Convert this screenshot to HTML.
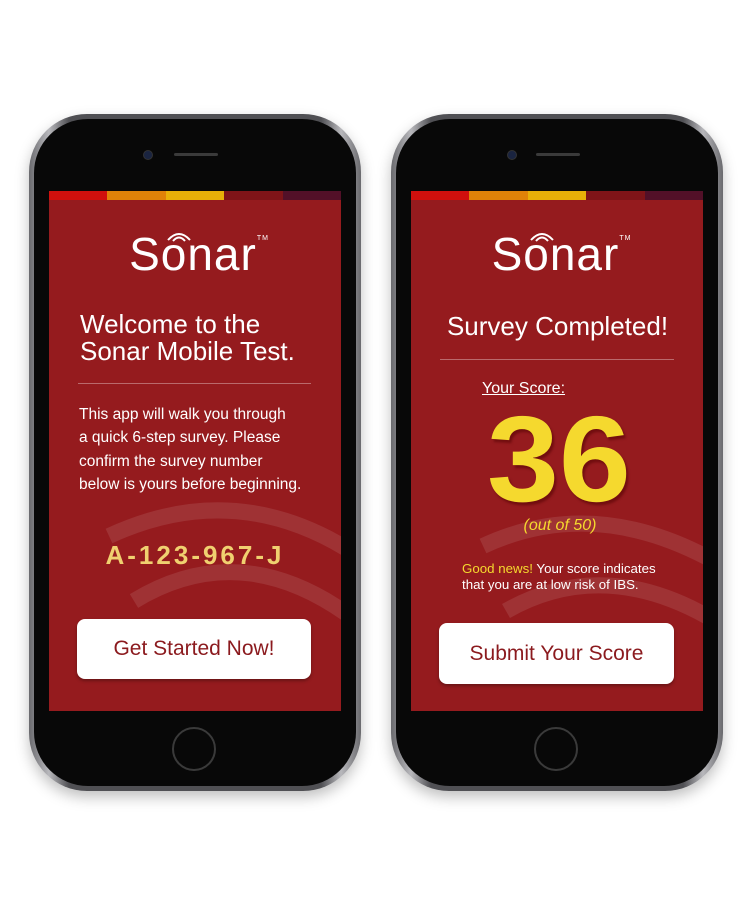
<!DOCTYPE html>
<html><head><style>
body{margin:0;width:750px;height:917px;background:#fff;position:relative;overflow:hidden;font-family:"Liberation Sans",sans-serif}
.ph{position:absolute;top:114px;width:332px;height:677px;border-radius:58px;background:linear-gradient(90deg,#6a6a6e,#b8b8bc 6%,#505054 12%,#505054 88%,#b8b8bc 94%,#6a6a6e);box-shadow:0 6px 14px rgba(0,0,0,.25)}
.in{position:absolute;left:5px;top:5px;right:5px;bottom:5px;border-radius:54px;background:#080808}
.cam{position:absolute;top:36px;width:8px;height:8px;border-radius:50%;background:#1a2440;border:1px solid #333}
.spk{position:absolute;top:39px;width:44px;height:3px;border-radius:2px;background:#3a3a3a}
.home{position:absolute;bottom:20px;width:40px;height:40px;border-radius:50%;border:2px solid #3a3a3a}
.scr{position:absolute;top:191px;width:292px;height:520px;background:#951b1e;overflow:hidden;color:#fff}
.bar{display:flex;height:9px}.bar i{flex:1}
.logo{position:absolute;top:227px;width:100%;text-align:center;font-size:46px;font-weight:300;letter-spacing:1px}
.logo sup{font-size:7px;vertical-align:top;position:relative;top:8px}
.btn{position:absolute;background:#fff;border-radius:8px;color:#8b1a1e;text-align:center;font-size:21px;box-shadow:0 2px 3px rgba(0,0,0,.3)}
.hr{position:absolute;height:1px;background:rgba(255,255,255,.35)}
.arcs{position:absolute;top:228px}
</style></head><body>
<div class="ph" style="left:29px"><div class="in"></div><div class="cam" style="left:114px"></div><div class="spk" style="left:145px"></div><div class="home" style="left:143px"></div></div>
<div class="ph" style="left:391px"><div class="in"></div><div class="cam" style="left:116px"></div><div class="spk" style="left:145px"></div><div class="home" style="left:143px"></div></div>

<div class="scr" style="left:49px">
<div class="bar"><i style="background:#d0100d"></i><i style="background:#e08208"></i><i style="background:#e8b008"></i><i style="background:#7f1418"></i><i style="background:#521028"></i></div>
<svg style="position:absolute;left:0;top:0" width="292" height="520"><g fill="none" stroke="rgba(255,255,255,.1)" stroke-width="16"><path d="M60 345 Q200 280 330 380"/><path d="M85 410 Q200 340 320 440"/></g></svg>
</div>
<div class="scr" style="left:411px">
<div class="bar"><i style="background:#d0100d"></i><i style="background:#e08208"></i><i style="background:#e8b008"></i><i style="background:#7f1418"></i><i style="background:#521028"></i></div>
<svg style="position:absolute;left:0;top:0" width="293" height="520"><g fill="none" stroke="rgba(255,255,255,.1)" stroke-width="16"><path d="M72 355 Q190 300 320 380"/><path d="M95 420 Q200 360 320 440"/></g></svg>
</div>

<div style="position:absolute;left:49px;width:292px;top:0;height:917px;color:#fff">
<div class="logo" style="left:4px">Sonar<sup>TM</sup></div>
<svg class="arcs" style="left:115px" width="30" height="14"><g fill="none" stroke="#fff" stroke-width="2"><path d="M4 12 Q15 0 26 12"/><path d="M9 13 Q15 6 21 13"/></g></svg>
<div style="position:absolute;left:31px;top:311px;font-size:26px;line-height:27px;font-weight:300">Welcome to the<br>Sonar Mobile Test.</div>
<div class="hr" style="left:29px;width:233px;top:383px"></div>
<div style="position:absolute;left:30px;top:403px;font-size:15.5px;line-height:23.3px">This app will walk you through<br>a quick 6-step survey. Please<br>confirm the survey number<br>below is yours before beginning.</div>
<div style="position:absolute;left:0;width:292px;text-align:center;top:540px;font-size:26px;font-weight:bold;letter-spacing:3px;color:#f0d070">A-123-967-J</div>
<div class="btn" style="left:28px;top:619px;width:234px;height:60px;line-height:60px">Get Started Now!</div>
</div>

<div style="position:absolute;left:411px;width:293px;top:0;height:917px;color:#fff">
<div class="logo" style="left:4px">Sonar<sup>TM</sup></div>
<svg class="arcs" style="left:116px" width="30" height="14"><g fill="none" stroke="#fff" stroke-width="2"><path d="M4 12 Q15 0 26 12"/><path d="M9 13 Q15 6 21 13"/></g></svg>
<div style="position:absolute;left:0;width:293px;text-align:center;top:311px;font-size:26px;font-weight:300">Survey Completed!</div>
<div class="hr" style="left:29px;width:234px;top:359px"></div>
<div style="position:absolute;left:71px;top:380px;font-size:16px;text-decoration:underline">Your Score:</div>
<div style="position:absolute;left:76px;top:398px;font-size:122px;font-weight:bold;color:#f5d92e;letter-spacing:0;text-shadow:2px 3px 2px rgba(80,0,0,.5);line-height:122px;transform:scaleX(1.06);transform-origin:left">36</div>
<div style="position:absolute;left:0;width:298px;text-align:center;top:517px;font-size:16px;font-style:italic;color:#f5d92e">(out of 50)</div>
<div style="position:absolute;left:51px;top:561px;font-size:13.3px;line-height:16px"><span style="color:#f5d92e">Good news!</span> Your score indicates<br>that you are at low risk of IBS.</div>
<div class="btn" style="left:28px;top:623px;width:235px;height:61px;line-height:61px">Submit Your Score</div>
</div>
</body></html>
